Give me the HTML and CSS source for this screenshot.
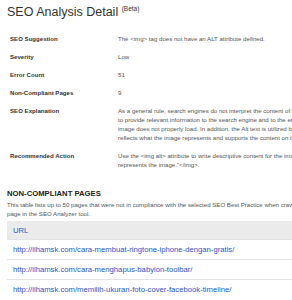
FILE: index.html
```html
<!DOCTYPE html>
<html lang="en">
<head>
    <meta charset="UTF-8">
    <meta name="viewport" content="width=device-width, initial-scale=1.0">
    <title>SEO Analysis Detail</title>
    <link rel="stylesheet" href="styles.css">
</head>
<body>
    <div class="page">
        <!-- Title -->
        <h1 class="title">SEO Analysis Detail <sup class="beta">(Beta)</sup></h1>

        <!-- Detail rows -->
        <table class="detail-table">
            <tr>
                <th>SEO Suggestion</th>
                <td>The &lt;img&gt; tag does not have an ALT attribute defined.</td>
            </tr>
            <tr>
                <th>Severity</th>
                <td>Low</td>
            </tr>
            <tr>
                <th>Error Count</th>
                <td>51</td>
            </tr>
            <tr>
                <th>Non-Compliant Pages</th>
                <td>9</td>
            </tr>
            <tr>
                <th>SEO Explanation</th>
                <td>As a general rule, search engines do not interpret the content of images. The Alt text is used<br>to provide relevant information to the search engine and to the end user in case the<br>image does not properly load. In addition, the Alt text is utilized by screen readers and it<br>reflects what the image represents and supports the content on the page.</td>
            </tr>
            <tr>
                <th>Recommended Action</th>
                <td>Use the &lt;img alt&gt; attribute to write descriptive content for the image: &lt;img source="pic.gif" alt="Alt text that<br>represents the image."&lt;/img&gt;.</td>
            </tr>
        </table>

        <!-- Non-compliant pages -->
        <h2 class="section-title">NON-COMPLIANT PAGES</h2>
        <p class="section-desc">This table lists up to 50 pages that were not in compliance with the selected SEO Best Practice when crawling the<br>page in the SEO Analyzer tool.</p>

        <table class="url-table">
            <thead>
                <tr><th>URL</th></tr>
            </thead>
            <tbody>
                <tr><td><a href="#">http://ilhamsk.com/cara-membuat-ringtone-iphone-dengan-gratis/</a></td></tr>
                <tr><td><a href="#">http://ilhamsk.com/cara-menghapus-babylon-toolbar/</a></td></tr>
                <tr><td><a href="#">http://ilhamsk.com/memilih-ukuran-foto-cover-facebook-timeline/</a></td></tr>
            </tbody>
        </table>
    </div>
</body>
</html>
```

FILE: styles.css
```css
body {
    margin: 0;
    padding: 0;
    font-family: 'Liberation Sans', Arial, sans-serif;
    background-color: #fff;
    color: #333;
    overflow: hidden;
}

.page {
    width: 640px;
    padding-left: 7px;
}

.title {
    margin: 4px 0 0;
    font-size: 12.5px;
    line-height: 16px;
    font-weight: normal;
    color: #333;
}

.beta {
    font-size: 6.5px;
    vertical-align: 5px;
    line-height: 0;
}

.detail-table {
    margin-top: 9px;
    border-collapse: collapse;
    font-size: 6.1px;
    line-height: 9px;
}

.detail-table th,
.detail-table td {
    padding: 4.5px 3px;
    text-align: left;
    vertical-align: top;
    white-space: nowrap;
}

.detail-table th {
    width: 102px;
    font-weight: bold;
    color: #333;
}

.detail-table td {
    color: #555;
}

.section-title {
    margin: 16px 0 0;
    font-size: 7.7px;
    line-height: 10px;
    font-weight: bold;
    color: #222;
}

.section-desc {
    margin: 1px 0 0;
    font-size: 6.1px;
    line-height: 9px;
    color: #555;
    white-space: nowrap;
}

.url-table {
    margin-top: 3px;
    width: 600px;
    border-collapse: collapse;
    font-size: 7.7px;
}

.url-table th {
    background-color: #ebebeb;
    color: #2a56c6;
    font-weight: normal;
    text-align: left;
    height: 18px;
    padding: 0 6px;
}

.url-table td {
    height: 19px;
    padding: 0 6px;
    border-top: 1px solid #e3e3e3;
}

.url-table a {
    color: #2a56c6;
    text-decoration: none;
}
```
